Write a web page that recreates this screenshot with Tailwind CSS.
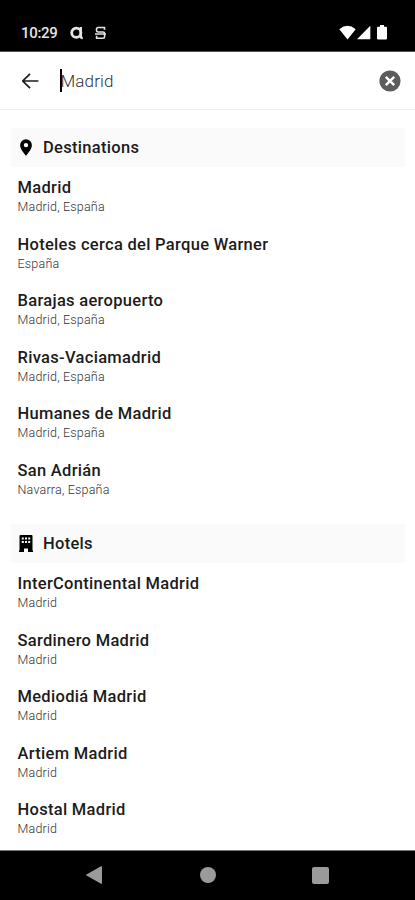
<!DOCTYPE html>
<html lang="es">
<head>
    <meta charset="UTF-8">
    <meta name="viewport" content="width=device-width, initial-scale=1.0">
    <title>Madrid</title>
    <script src="https://cdn.jsdelivr.net/npm/@tailwindcss/browser@4"></script>
</head>
<body class="bg-white font-[Roboto,sans-serif] text-[#1c1c1c]">
<div class="w-[415px] h-[900px] flex flex-col overflow-hidden">
    <!-- Status Bar -->
    <div class="h-[52px] shrink-0 bg-black border-b border-[#555] flex items-center pt-3.5 pl-[21px] pr-[28px] text-[#e4e4e4]">
        <span class="w-[37px] pt-px text-[15px] font-medium tracking-[-0.3px] whitespace-nowrap">10:29</span>
        <svg class="ml-3 w-[14px] h-[14px]" viewBox="0 0 14 14" fill="none" stroke="currentColor">
            <circle cx="6.3" cy="6.8" r="4.6" stroke-width="2.8"></circle>
            <path d="M10.8 1v9.5q0 1.5 2 1.5" stroke-width="2.4"></path>
        </svg>
        <svg class="ml-[10px] w-[13px] h-[14px]" viewBox="0 0 13 14" fill="none" stroke="currentColor" stroke-width="1.6">
            <path d="M10.5 3.8V1.5H4.2Q2.5 1.5 2.5 3.2V4.6Q2.5 6 4.2 6H9Q10.6 6 10.6 7.6V10.6Q10.6 12.3 9 12.3H2.6V9.8M1 8h11"></path>
        </svg>
        <svg class="ml-auto w-[17px] h-[15px]" viewBox="0 0 17 15" fill="#fff">
            <path d="M.3 4.2Q8.5-2.6 16.7 4.2L8.5 14.6z"></path>
        </svg>
        <svg class="ml-px w-[14px] h-[15px]" viewBox="0 0 14 15" fill="#fff">
            <path d="M13.3.8v13.4H0z"></path>
        </svg>
        <svg class="ml-[6px] w-[10px] h-[15px]" viewBox="0 0 10 15" fill="#fff">
            <path d="M3 0h4v1.7h2q1 0 1 1v10.8q0 1-1 1H1q-1 0-1-1V2.7q0-1 1-1h2z"></path>
        </svg>
    </div>

    <!-- Search Bar -->
    <div class="h-[58px] shrink-0 border-b border-[#eee] flex items-center pl-[22px] pr-[14px]">
        <svg class="w-[17px] h-[16px]" viewBox="0 0 17 16" fill="none" stroke="#1c1c1c" stroke-width="1.7">
            <path d="M8 .8L.8 8 8 15.2M.8 8h15.6"></path>
        </svg>
        <div class="ml-[21px] w-[1.5px] h-[23px] bg-black"></div>
        <span class="-ml-px pt-[3px] text-[17px] font-light tracking-[0.15px] text-[#333]">Madrid</span>
        <svg class="ml-auto w-[22px] h-[22px]" viewBox="0 0 22 22">
            <circle cx="11" cy="11" r="10.6" fill="#5c5c5c"></circle>
            <path d="M6.8 6.8l8.4 8.4M15.2 6.8l-8.4 8.4" stroke="#fff" stroke-width="2.4"></path>
        </svg>
    </div>

    <!-- Destinations -->
    <div class="mt-[18px] ml-[11px] mr-[10px] h-[39px] shrink-0 bg-[#fafafa] flex items-center">
        <svg class="ml-[9px] w-[12px] h-[17px]" viewBox="0 0 12 17" fill="#000">
            <path fill-rule="evenodd" d="M6 .3a5.9 5.9 0 0 0-5.9 5.9C.1 10.4 6 16.7 6 16.7s5.9-6.3 5.9-10.5A5.9 5.9 0 0 0 6 .3zM6 3.9a2.2 2.2 0 1 1 0 4.400 2.200 2.200 0 0 1 0-4.400z"></path>
        </svg>
        <h2 class="ml-[11px] pt-px text-[16.5px] font-medium tracking-[0.3px]">Destinations</h2>
    </div>
    <ul class="pl-[17.5px] pt-2.5 h-[357px] shrink-0 whitespace-nowrap">
        <li class="h-[56.6px]">
            <p class="text-[16.5px] leading-[22px] font-medium tracking-[0.3px]">Madrid</p>
            <p class="text-[12.5px] leading-[15px] font-light tracking-[0.2px] text-[#333]">Madrid, España</p>
        </li>
        <li class="h-[56.6px]">
            <p class="text-[16.5px] leading-[22px] font-medium tracking-[0.3px]">Hoteles cerca del Parque Warner</p>
            <p class="text-[12.5px] leading-[15px] font-light tracking-[0.2px] text-[#333]">España</p>
        </li>
        <li class="h-[56.6px]">
            <p class="text-[16.5px] leading-[22px] font-medium tracking-[0.3px]">Barajas aeropuerto</p>
            <p class="text-[12.5px] leading-[15px] font-light tracking-[0.2px] text-[#333]">Madrid, España</p>
        </li>
        <li class="h-[56.6px]">
            <p class="text-[16.5px] leading-[22px] font-medium tracking-[0.3px]">Rivas-Vaciamadrid</p>
            <p class="text-[12.5px] leading-[15px] font-light tracking-[0.2px] text-[#333]">Madrid, España</p>
        </li>
        <li class="h-[56.6px]">
            <p class="text-[16.5px] leading-[22px] font-medium tracking-[0.3px]">Humanes de Madrid</p>
            <p class="text-[12.5px] leading-[15px] font-light tracking-[0.2px] text-[#333]">Madrid, España</p>
        </li>
        <li class="h-[56.6px]">
            <p class="text-[16.5px] leading-[22px] font-medium tracking-[0.3px]">San Adrián</p>
            <p class="text-[12.5px] leading-[15px] font-light tracking-[0.2px] text-[#333]">Navarra, España</p>
        </li>
    </ul>

    <!-- Hotels -->
    <div class="ml-[11px] mr-[10px] h-[39px] shrink-0 bg-[#fafafa] flex items-center">
        <svg class="ml-[8px] w-[14px] h-[17px]" viewBox="0 0 14 17" fill="#000">
            <path fill-rule="evenodd" d="M1.5 0h11q1 0 1 1v14.5h.5V17H9v-3.5H5V17H0v-1.5h.5V1q0-1 1-1zM2.8 2.5v2h2v-2zM6 2.5v2h2v-2zM9.2 2.5v2h2v-2zM2.8 6v2h2V6zM6 6v2h2V6zM9.2 6v2h2V6z"></path>
        </svg>
        <h2 class="ml-[10px] pt-px text-[16.5px] font-medium tracking-[0.3px]">Hotels</h2>
    </div>
    <ul class="pl-[17.5px] pt-2.5 h-[287px] shrink-0 whitespace-nowrap">
        <li class="h-[56.6px]">
            <p class="text-[16.5px] leading-[22px] font-medium tracking-[0.3px]">InterContinental Madrid</p>
            <p class="text-[12.5px] leading-[15px] font-light tracking-[0.2px] text-[#333]">Madrid</p>
        </li>
        <li class="h-[56.6px]">
            <p class="text-[16.5px] leading-[22px] font-medium tracking-[0.3px]">Sardinero Madrid</p>
            <p class="text-[12.5px] leading-[15px] font-light tracking-[0.2px] text-[#333]">Madrid</p>
        </li>
        <li class="h-[56.6px]">
            <p class="text-[16.5px] leading-[22px] font-medium tracking-[0.3px]">Mediodiá Madrid</p>
            <p class="text-[12.5px] leading-[15px] font-light tracking-[0.2px] text-[#333]">Madrid</p>
        </li>
        <li class="h-[56.6px]">
            <p class="text-[16.5px] leading-[22px] font-medium tracking-[0.3px]">Artiem Madrid</p>
            <p class="text-[12.5px] leading-[15px] font-light tracking-[0.2px] text-[#333]">Madrid</p>
        </li>
        <li class="h-[56.6px]">
            <p class="text-[16.5px] leading-[22px] font-medium tracking-[0.3px]">Hostal Madrid</p>
            <p class="text-[12.5px] leading-[15px] font-light tracking-[0.2px] text-[#333]">Madrid</p>
        </li>
    </ul>

    <!-- Navigation Bar -->
    <div class="grow bg-black border-t border-[#777] flex items-center justify-between pl-[86px] pr-[86px] pb-px text-[#9a9a9a]">
        <svg class="w-[16px] h-[18px]" viewBox="0 0 16 18" fill="currentColor">
            <path d="M15 .3q1-.4 1 .6v16.2q0 1-1 .6L.5 9.5q-.7-.5 0-1z"></path>
        </svg>
        <div class="ml-px w-[16px] h-[16px] rounded-full bg-[#9a9a9a]"></div>
        <div class="w-[17px] h-[17px] rounded-[2px] bg-[#9a9a9a]"></div>
    </div>
</div>
</body>
</html>
